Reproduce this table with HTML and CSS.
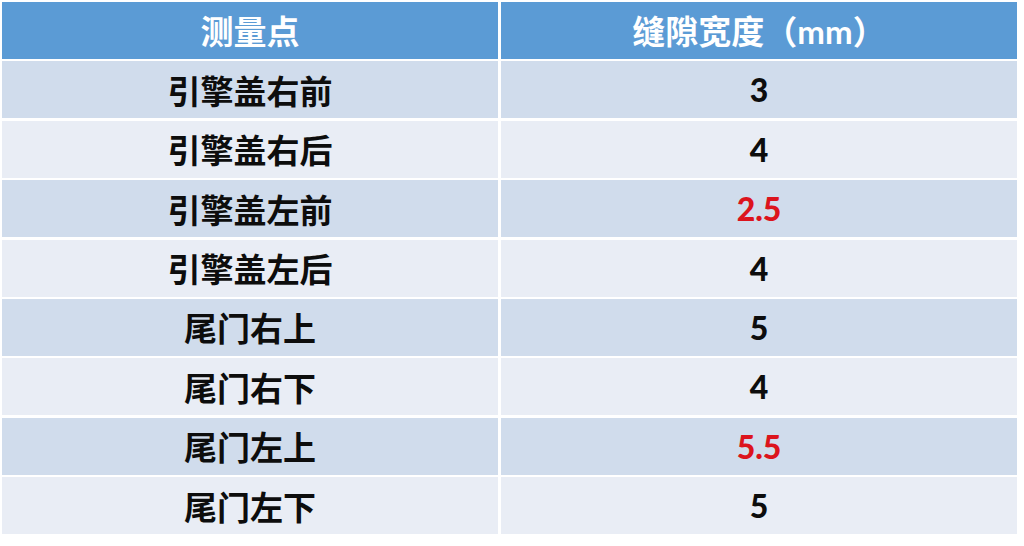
FILE: index.html
```html
<!DOCTYPE html>
<html lang="zh-CN">
<head>
<meta charset="utf-8">
<title>测量点 缝隙宽度</title>
<link rel="stylesheet" href="styles.css">
</head>
<body>
<div class="table">
  <div class="cell head">测量点</div>
  <div class="cell head">缝隙宽度（mm）</div>

  <div class="cell odd">引擎盖右前</div>
  <div class="cell odd num">3</div>

  <div class="cell even">引擎盖右后</div>
  <div class="cell even num">4</div>

  <div class="cell odd">引擎盖左前</div>
  <div class="cell odd num red">2.5</div>

  <div class="cell even">引擎盖左后</div>
  <div class="cell even num">4</div>

  <div class="cell odd">尾门右上</div>
  <div class="cell odd num">5</div>

  <div class="cell even">尾门右下</div>
  <div class="cell even num">4</div>

  <div class="cell odd">尾门左上</div>
  <div class="cell odd num red">5.5</div>

  <div class="cell even">尾门左下</div>
  <div class="cell even num">5</div>
</div>
</body>
</html>
```

FILE: styles.css
```css
html, body {
  margin: 0;
  padding: 0;
  background: #ffffff;
}

body {
  width: 1024px;
  height: 546px;
  overflow: hidden;
}

.table {
  display: grid;
  grid-template-columns: 496px 516px;
  grid-auto-rows: 57px;
  column-gap: 3px;
  row-gap: 2.4px;
  padding: 2px 0 0 2px;
  font-family: "Lato", "Noto Sans CJK SC", sans-serif;
  font-weight: 700;
}

.cell {
  display: flex;
  align-items: center;
  justify-content: center;
  font-size: 33px;
  color: #0d0d0d;
  line-height: 1;
  padding-top: 3px;
  box-sizing: border-box;
}

.head {
  background: #5b9bd5;
  color: #ffffff;
  padding-top: 1px;
}

.odd {
  background: #d0dcec;
}

.even {
  background: #e9edf5;
}

.num {
  font-size: 32px;
  font-weight: 900;
  padding-top: 1px;
}

.red {
  color: #dc141d;
}
```
